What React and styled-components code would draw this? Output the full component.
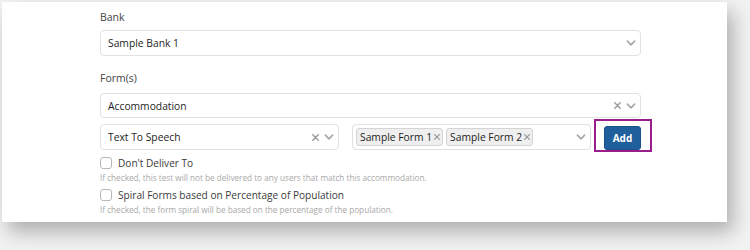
import React from "react";
import styled, { createGlobalStyle } from "styled-components";

const Global = createGlobalStyle`
  html, body { margin: 0; padding: 0; background: #f2f2f2; }
  body { font-family: "Open Sans", "Liberation Sans", sans-serif; }
  * { box-sizing: border-box; }
`;

const Page = styled.div`
  width: 750px;
  height: 250px;
  padding: 2px 0 0 2px;
  overflow: hidden;
`;

const Panel = styled.div`
  width: 725px;
  height: 220px;
  background: #fff;
  box-shadow: 6px 10px 18px rgba(0, 0, 0, 0.28);
  padding: 7px 0 0 98px;
`;

const Content = styled.div`
  width: 541px;
  display: flex;
  flex-direction: column;
`;

const Label = styled.div`
  font-size: 10.5px;
  line-height: 16px;
  color: #444;
  margin-bottom: ${(p) => p.$mb || 5}px;
  margin-top: ${(p) => p.$mt || 0}px;
`;

const Box = styled.div`
  height: ${(p) => p.$h || 26}px;
  border: 1px solid #e1e1e1;
  border-radius: 4px;
  display: flex;
  align-items: center;
  padding: 0 3px 0 7px;
  font-size: 10.3px;
  font-weight: 500;
  color: #1e1e1e;
  background: #fff;
`;

const Value = styled.div`
  flex: 1;
  white-space: nowrap;
`;

const Indicators = styled.div`
  display: flex;
  align-items: center;
  gap: 3px;
`;

const Row = styled.div`
  display: grid;
  grid-template-columns: 1fr 1fr 37px;
  column-gap: 13px;
  align-items: center;
  margin-top: ${(p) => p.$mt || 0}px;
`;

const Chips = styled.div`
  flex: 1;
  display: flex;
  gap: 3px;
  margin-left: -4px;
`;

const Chip = styled.div`
  height: 18px;
  display: flex;
  align-items: center;
  gap: 1px;
  padding: 0 1px 0 3px;
  border: 1px solid #d4d4d4;
  border-radius: 3px;
  background: #efefef;
  font-size: 10.3px;
  font-weight: 500;
  color: #1e1e1e;
  white-space: nowrap;
`;

const AddWrap = styled.div`
  position: relative;
  height: 24px;
`;

const Highlight = styled.div`
  position: absolute;
  left: -10px;
  top: -6px;
  right: -11px;
  bottom: -3px;
  border: 2.5px solid #991e8b;
  pointer-events: none;
`;

const AddButton = styled.button`
  width: 37px;
  height: 24px;
  border: 1px solid #1a5188;
  border-radius: 3px;
  background: #1f5f9b;
  color: #fff;
  font-family: inherit;
  font-size: 10px;
  font-weight: 700;
  padding: 0;
`;

const CheckRow = styled.label`
  display: flex;
  align-items: center;
  gap: 6px;
  font-size: 10.1px;
  color: #3a3a3a;
  margin-top: ${(p) => p.$mt || 0}px;
  height: 14px;
`;

const Check = styled.span`
  width: 12px;
  height: 12px;
  border: 1px solid #b8b8b8;
  border-radius: 3px;
  background: #fff;
`;

const Help = styled.div`
  font-size: 8.2px;
  color: #a8a8a8;
  margin-top: ${(p) => p.$mt || 0}px;
  line-height: 10px;
`;

const Chevron = ({ size = 12 }) => (
  <svg width={size} height={size} viewBox="0 0 20 20" fill="none">
    <path d="M4 7l6 6 6-6" stroke="#a8a8a8" strokeWidth="2.8" strokeLinecap="round" strokeLinejoin="round" />
  </svg>
);

const Cross = ({ size = 9, color = "#9a9a9a" }) => (
  <svg width={size} height={size} viewBox="0 0 10 10" fill="none">
    <path d="M2 2l6 6M8 2l-6 6" stroke={color} strokeWidth="1.6" strokeLinecap="round" />
  </svg>
);

export default function App() {
  return (
    <>
      <Global />
      <Page>
        <Panel>
          <Content>
            <Label>Bank</Label>
            <Box>
              <Value>Sample Bank 1</Value>
              <Indicators>
                <Chevron />
              </Indicators>
            </Box>
            <Label $mt={14} $mb={7}>Form(s)</Label>
            <Box $h={25}>
              <Value>Accommodation</Value>
              <Indicators>
                <Cross />
                <Chevron />
              </Indicators>
            </Box>
            <Row $mt={6}>
              <Box $h={26}>
                <Value>Text To Speech</Value>
                <Indicators>
                  <Cross />
                  <Chevron />
                </Indicators>
              </Box>
              <Box $h={26}>
                <Chips>
                  <Chip>Sample Form 1<Cross size={8} /></Chip>
                  <Chip>Sample Form 2<Cross size={8} /></Chip>
                </Chips>
                <Indicators>
                  <Chevron />
                </Indicators>
              </Box>
              <AddWrap>
                <AddButton>Add</AddButton>
                <Highlight />
              </AddWrap>
            </Row>
            <CheckRow $mt={6}>
              <Check />
              Don't Deliver To
            </CheckRow>
            <Help $mt={3}>If checked, this test will not be delivered to any users that match this accommodation.</Help>
            <CheckRow $mt={5}>
              <Check />
              Spiral Forms based on Percentage of Population
            </CheckRow>
            <Help $mt={3}>If checked, the form spiral will be based on the percentage of the population.</Help>
          </Content>
        </Panel>
      </Page>
    </>
  );
}
